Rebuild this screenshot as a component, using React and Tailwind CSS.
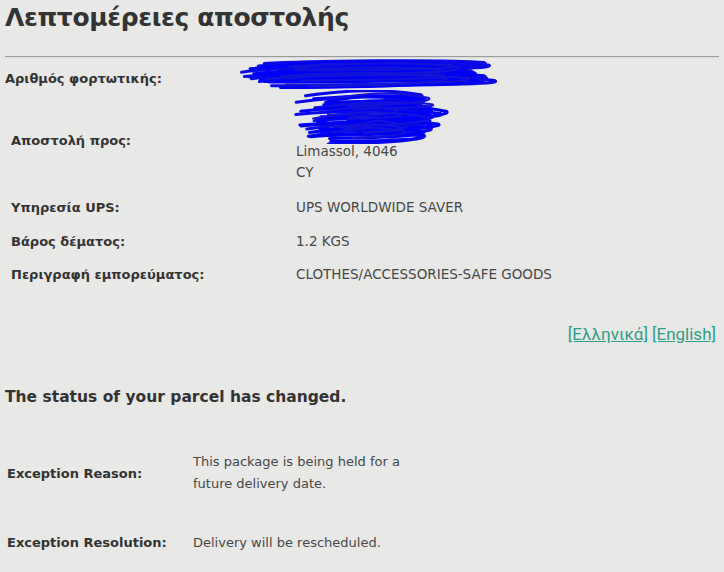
import React from 'react';

// redaction scribble: lots of long horizontal loops in blue marker
const scribble = (x0, x1, y0, y1, n, seed) => {
  let s = seed;
  const rnd = () => {
    s = (s * 9301 + 49297) % 233280;
    return s / 233280;
  };
  let d = '';
  for (let i = 0; i < n; i++) {
    const y = y0 + (y1 - y0) * (i / (n - 1)) + (rnd() - 0.5) * 4;
    const a = x0 + rnd() * 40;
    const b = x1 - rnd() * 40;
    const dy = 2 + rnd() * 5;
    d += `M${a} ${y} C${a + 40} ${y - dy} ${b - 40} ${y - dy - 2} ${b} ${y - 1} C${b + 8} ${y + 2} ${b - 20} ${y + dy} ${a + 20} ${y + dy + 1} `;
  }
  return d;
};

const Redacted = ({ className, w, h, rows, seed }) => (
  <svg className={className} width={w} height={h} viewBox={`0 0 ${w} ${h}`}>
    <path d={scribble(2, w - 2, 5, h - 7, rows, seed)} fill="none" stroke="#0a0ae6" strokeWidth="3" strokeLinecap="round" />
    <path d={scribble(16, w - 16, 7, h - 9, rows + 2, seed + 7)} fill="none" stroke="#0000f5" strokeWidth="3" strokeLinecap="round" />
    <path d={scribble(30, w - 30, 9, h - 10, rows, seed + 19)} fill="none" stroke="#1414d8" strokeWidth="2" strokeLinecap="round" />
  </svg>
);

const Row = ({ label, children, h = 'h-[33.5px]' }) => (
  <div className={`flex items-center ${h}`}>
    <div className="w-[296px] pl-[11px] font-bold text-[#333]">{label}</div>
    <div className="text-[13.5px] leading-[21px] text-[#474747]">{children}</div>
  </div>
);

export default function App() {
  return (
    <div className="min-h-[572px] w-[724px] overflow-hidden bg-[#e8e8e7] text-[13px] text-[#333] [font-family:'DejaVu_Sans',Verdana,sans-serif]">
      <h1 className="pl-[5px] pt-[2px] text-[25px] font-bold leading-[32px] tracking-[-0.4px] text-[#333]">Λεπτομέρειες αποστολής</h1>
      <div className="mx-[5px] mt-[22px] h-[2px] border-t border-[#9a9a9a] bg-[#dcdcdc]" />

      <div className="relative">
        <div className="flex h-[33px] items-center pl-[5px] pt-[8px]">
          <div className="font-bold">Αριθμός φορτωτικής:</div>
        </div>
        <Redacted className="absolute left-[226px] top-[0px]" w={272} h={32} rows={6} seed={11} />
        <Redacted className="absolute left-[278px] top-[32px]" w={184} h={54} rows={8} seed={37} />
        <Row label="Αποστολή προς:" h="h-[100px]">
          <div className="h-[21px]" />
          <div className="h-[21px]" />
          <div>Limassol, 4046</div>
          <div>CY</div>
        </Row>
        <Row label="Υπηρεσία UPS:">UPS WORLDWIDE SAVER</Row>
        <Row label="Βάρος δέματος:">1.2 KGS</Row>
        <Row label="Περιγραφή εμπορεύματος:">CLOTHES/ACCESSORIES-SAFE GOODS</Row>
      </div>

      <div className="mt-[30px] flex justify-end gap-[4px] pr-[8px] text-[17px] text-[#2f9e89] [font-family:Roboto,sans-serif]">
        <a href="#" className="underline">[Ελληνικά]</a>
        <a href="#" className="underline">[English]</a>
      </div>

      <h2 className="mt-[39px] pl-[5px] text-[15.5px] font-bold text-[#333]">The status of your parcel has changed.</h2>

      <div className="mt-[42px] flex items-center pl-[7px]">
        <div className="w-[186px] font-bold">Exception Reason:</div>
        <div className="leading-[22px] text-[#474747]">
          <div>This package is being held for a</div>
          <div>future delivery date.</div>
        </div>
      </div>

      <div className="mt-[38px] flex items-center pl-[7px]">
        <div className="w-[186px] font-bold">Exception Resolution:</div>
        <div className="text-[#474747]">Delivery will be rescheduled.</div>
      </div>
    </div>
  );
}
